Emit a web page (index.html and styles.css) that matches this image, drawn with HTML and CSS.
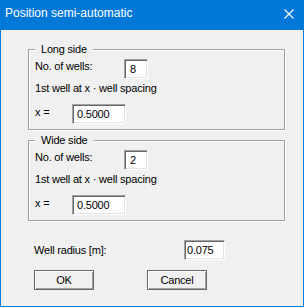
FILE: index.html
```html
<!DOCTYPE html>
<html lang="en">
<head>
    <meta charset="UTF-8">
    <title>Position semi-automatic</title>
    <link rel="stylesheet" href="styles.css">
</head>
<body>
    <div class="window">
        <div class="titlebar">
            <span class="title">Position semi-automatic</span>
            <svg class="close" width="10" height="10" viewBox="0 0 10 10">
                <path d="M0.5 0.5 L9.5 9.5 M9.5 0.5 L0.5 9.5" stroke="#fff" stroke-width="1.1" fill="none"/>
            </svg>
        </div>

        <div class="content">
            <div class="group">
                <span class="legend">Long side</span>
                <div class="row">
                    <span class="label label-wells">No. of wells:</span>
                    <input class="field field-count" type="text" value="8">
                </div>
                <div class="note">1st well at x · well spacing</div>
                <div class="row">
                    <span class="label label-x">x =</span>
                    <input class="field field-x" type="text" value="0.5000">
                </div>
            </div>

            <div class="group">
                <span class="legend">Wide side</span>
                <div class="row">
                    <span class="label label-wells">No. of wells:</span>
                    <input class="field field-count" type="text" value="2">
                </div>
                <div class="note">1st well at x · well spacing</div>
                <div class="row">
                    <span class="label label-x">x =</span>
                    <input class="field field-x" type="text" value="0.5000">
                </div>
            </div>

            <div class="row radius-row">
                <span class="label label-radius">Well radius [m]:</span>
                <input class="field field-radius" type="text" value="0.075">
            </div>

            <div class="buttons">
                <button class="btn">OK</button>
                <button class="btn">Cancel</button>
            </div>
        </div>
    </div>
</body>
</html>
```

FILE: styles.css
```css
:root {
    --blue: #0078d7;
    --face: #f0f0f0;
    --shadow: #a0a0a0;
    --dark: #696969;
    --light: #e3e3e3;
    --white: #ffffff;
}

* {
    margin: 0;
    padding: 0;
    box-sizing: border-box;
}

body {
    background: var(--white);
    font-family: 'Liberation Sans', Arial, sans-serif;
    font-size: 11px;
    line-height: 13px;
    letter-spacing: -0.2px;
    color: #000;
}

.window {
    width: 304px;
    height: 307px;
    background: var(--face);
    border: 1px solid var(--blue);
    border-top: none;
}

.titlebar {
    display: flex;
    justify-content: space-between;
    align-items: flex-start;
    height: 30px;
    margin: 0 -1px;
    padding: 6px 10px 0 5px;
    background: var(--blue);
    color: var(--white);
    font-size: 12px;
    line-height: 14px;
    letter-spacing: 0;
}

.close {
    margin-top: 3px;
}

.content {
    padding: 19px 0 0 27px;
}

.group {
    position: relative;
    width: 257px;
    height: 81px;
    padding: 9px 0 0 6px;
    border: 1px solid var(--shadow);
    box-shadow: inset 1px 1px var(--white), 1px 1px var(--white);
    margin-bottom: 10px;
}

.legend {
    position: absolute;
    top: -7px;
    left: 6px;
    padding: 0 6px 0 6px;
    background: var(--face);
}

.row {
    display: flex;
    align-items: flex-start;
}

.label {
    padding-top: 1px;
}

.label-wells {
    width: 89px;
}

.label-x {
    width: 37px;
    padding-top: 2px;
}

.note {
    margin: 3px 0 9px;
}

.field {
    height: 20px;
    font: inherit;
    letter-spacing: -0.2px;
    color: #000;
    background: var(--white);
    border: 1px solid;
    border-color: var(--shadow) var(--white) var(--white) var(--shadow);
    box-shadow: inset 1px 1px var(--dark), inset -1px -1px var(--light);
    outline: none;
}

.field-count {
    width: 24px;
    padding-left: 5px;
}

.field-x {
    width: 54px;
    padding-left: 4px;
}

.radius-row {
    margin-top: 19px;
    padding-left: 6px;
}

.label-radius {
    width: 150px;
    padding-top: 4px;
}

.field-radius {
    width: 41px;
    padding-left: 2px;
}

.buttons {
    display: flex;
    gap: 53px;
    margin-top: 10px;
    padding-left: 6px;
}

.btn {
    width: 60px;
    height: 20px;
    font: inherit;
    letter-spacing: -0.2px;
    color: #000;
    background: var(--face);
    border: 1px solid var(--dark);
    box-shadow: inset 1px 1px var(--white), inset -1px -1px var(--shadow);
}
```
